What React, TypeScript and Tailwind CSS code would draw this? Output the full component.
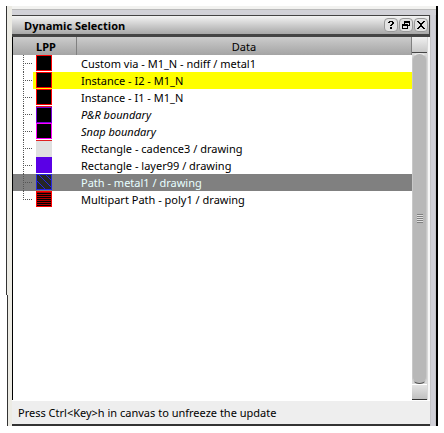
import React, { useState } from "react";

type Item = {
  label: string;
  swatch: string;
  tone?: "highlight" | "selected";
  italic?: boolean;
  marker?: boolean;
};

const items: Item[] = [
  { label: "Custom via - M1_N - ndiff / metal1", swatch: "red" },
  { label: "Instance - I2 - M1_N", swatch: "red", tone: "highlight" },
  { label: "Instance - I1 - M1_N", swatch: "red" },
  { label: "P&R boundary", swatch: "purple", italic: true, marker: true },
  { label: "Snap boundary", swatch: "magenta", italic: true },
  { label: "Rectangle - cadence3 / drawing", swatch: "grey", marker: true },
  { label: "Rectangle - layer99 / drawing", swatch: "violet" },
  { label: "Path - metal1 / drawing", swatch: "hatch", tone: "selected" },
  { label: "Multipart Path - poly1 / drawing", swatch: "lines" },
];

const boxes: Record<string, string> = {
  red: "border-[#ff0000] bg-black",
  purple: "border-[#7a00d8] bg-black",
  magenta: "border-[#ff00ff] bg-black",
  grey: "border-[#e0e0e0] bg-[#e0e0e0]",
  violet: "border-[#5a00e6] bg-[#5a00e6]",
  hatch: "border-[#2626e0] bg-[#262626]",
  lines: "border-[#ff0000] bg-black",
};

function Swatch({ kind }: { kind: string }) {
  return (
    <div className={`size-4 border ${boxes[kind]}`}>
      {kind === "hatch" && (
        <svg width="14" height="14" viewBox="0 0 14 14" className="block" aria-hidden="true">
          <path d="M0 6L8 14M2 0L14 12M9 0L14 5" stroke="#2626e0" fill="none" />
        </svg>
      )}
      {kind === "lines" && (
        <svg width="14" height="14" viewBox="0 0 14 14" className="block" aria-hidden="true">
          {[0, 2, 4, 6, 8, 10, 12].map((y) => (
            <rect key={y} x="0" y={y} width="14" height="1" fill="#b00000" />
          ))}
        </svg>
      )}
    </div>
  );
}

function Branch({ last }: { last: boolean }) {
  return (
    <svg width="10" height="17" viewBox="0 0 10 17" shapeRendering="crispEdges" className="block" aria-hidden="true">
      <path d={last ? "M0.5 0V9" : "M0.5 0V17"} stroke="#555" strokeDasharray="1 1" />
      <path d="M2 8.5H10" stroke="#555" strokeDasharray="1 1" />
    </svg>
  );
}

function TitleButton({ label, children }: { label: string; children: React.ReactNode }) {
  return (
    <button
      type="button"
      aria-label={label}
      className="flex size-[14px] items-center justify-center rounded-[4px] border border-[#999] bg-[#e2e2e2]"
    >
      <svg width="8" height="8" viewBox="0 0 8 8" shapeRendering="crispEdges" fill="none" stroke="#000">
        {children}
      </svg>
    </button>
  );
}

function ScrollBar() {
  return (
    <div className="flex w-4 shrink-0 flex-col border-r border-[#d8d8d8] bg-[#d8d8d8]">
      <div className="h-4 border-b border-[#444] bg-linear-to-b from-[#f0f0f0] to-[#c8c8c8]" />
      <div className="flex flex-1 flex-col items-center justify-center rounded-[7px] border border-x-[#c8c8c8] border-t-[#eeeeee] border-b-[#555] bg-[#b8b8b8]">
        <svg width="6" height="9" viewBox="0 0 6 9" shapeRendering="crispEdges" aria-hidden="true">
          <path d="M0 0.5H6M0 2.5H6M0 4.5H6M0 6.5H6M0 8.5H6" stroke="#808080" />
          <path d="M0 1.5H6M0 3.5H6M0 5.5H6M0 7.5H6" stroke="#e0e0e0" />
        </svg>
      </div>
      <div className="h-4 border-t border-b border-t-white border-b-[#333] bg-linear-to-b from-[#e4e4e4] to-[#c0c0c0]" />
    </div>
  );
}

export default function App() {
  const [selected, setSelected] = useState(7);
  return (
    <main className="flex min-h-screen bg-white pt-[6px] pr-[6px] pb-[7px] pl-[6px] font-['Noto_Sans','Open_Sans',sans-serif] text-[11px] leading-[17px] text-black">
      <div className="flex w-[6px] shrink-0 flex-col">
        <div className="h-[289px] border-l border-[#333] bg-[#ecebe4]" />
        <div className="ml-px flex-1 border-l border-[#333] bg-[#ecebe4]" />
      </div>

      <div className="flex min-w-0 flex-1 flex-col border-r-2 border-black bg-[#f4f4f4]">
        <div className="h-[3px] bg-[#f2f2f0]" />
        <div className="h-[6px] border-t border-[#bbb] bg-[#d2d2d8]" />
        <div className="flex flex-1">
          <section className="flex min-w-0 flex-1 flex-col border-b-2 border-[#333]">
            <header className="flex h-[22px] items-center justify-between border-t border-r border-b-[3px] border-[#444] bg-linear-to-b from-[#f4f4f4] to-[#a8a8a8] pr-px pl-3">
              <h1 className="font-['Open_Sans','Noto_Sans',sans-serif] text-[11px] font-bold">Dynamic Selection</h1>
              <div className="flex gap-px">
                <TitleButton label="Help">
                  <path d="M1 1.5H3M2 0.5H6M5 1.5H7M5 2.5H7M4 3.5H6M3 4.5H5M3 6.5H5M3 7.5H5" />
                </TitleButton>
                <TitleButton label="Restore">
                  <path d="M2 0.5H8M2 1.5H8M2.5 1V3M7.5 1V5M6 4.5H8M0 3.5H6M0 4.5H6M0.5 4V8M5.5 4V8M0 7.5H6" />
                </TitleButton>
                <TitleButton label="Close">
                  <path d="M0 0.5H2M6 0.5H8M1 1.5H3M5 1.5H7M2 2.5H6M3 3.5H5M3 4.5H5M2 5.5H6M1 6.5H3M5 6.5H7M0 7.5H2M6 7.5H8" />
                </TitleButton>
              </div>
            </header>

            <div className="flex flex-1 border-r-2 border-[#f6f6f6]">
              <div className="min-w-0 flex-1 border-l border-black bg-white">
                <table className="w-full table-fixed border-separate border-spacing-0">
                  <thead>
                    <tr className="h-[18px] bg-linear-to-b from-[#cccccc] to-[#a4a4a4]">
                      <th className="w-16 border-r border-[#808080] p-0 pl-[3px] text-center font-bold">LPP</th>
                      <th className="border-r border-[#808080] p-0 text-center font-normal">Data</th>
                    </tr>
                  </thead>
                  <tbody>
                    {items.map((item, i) => {
                      const isSelected = selected === i;
                      const yellow = item.tone === "highlight" && !isSelected;
                      return (
                        <tr
                          key={item.label}
                          onClick={() => setSelected(i)}
                          className={isSelected ? "bg-[#808080] text-[#e8ffff]" : ""}
                        >
                          <td className="h-[17px] p-0">
                            <div className="flex h-[17px] pl-[10px]">
                              <Branch last={i === items.length - 1} />
                              <div className={yellow ? "flex-1 bg-[#ffff00] pl-[3px]" : "flex-1 pl-[3px]"}>
                                <div className={item.marker ? "w-4 border-t border-[#e02020]" : "w-4"}>
                                  <Swatch kind={item.swatch} />
                                </div>
                              </div>
                            </div>
                          </td>
                          <td className={yellow ? "h-[17px] bg-[#ffff00] p-0 pl-1" : "h-[17px] p-0 pl-1"}>
                            <div className={item.italic ? "truncate italic" : "truncate"}>{item.label}</div>
                          </td>
                        </tr>
                      );
                    })}
                  </tbody>
                </table>
              </div>
              <ScrollBar />
            </div>

            <footer className="flex h-[24px] items-center border-t border-white bg-[#eeeeee] pl-[6px]">
              Press Ctrl&lt;Key&gt;h in canvas to unfreeze the update
            </footer>
          </section>
          <div className="w-[6px] shrink-0 border-x border-[#c4c4c8] bg-[#d0d0d8]" />
        </div>
      </div>
    </main>
  );
}
